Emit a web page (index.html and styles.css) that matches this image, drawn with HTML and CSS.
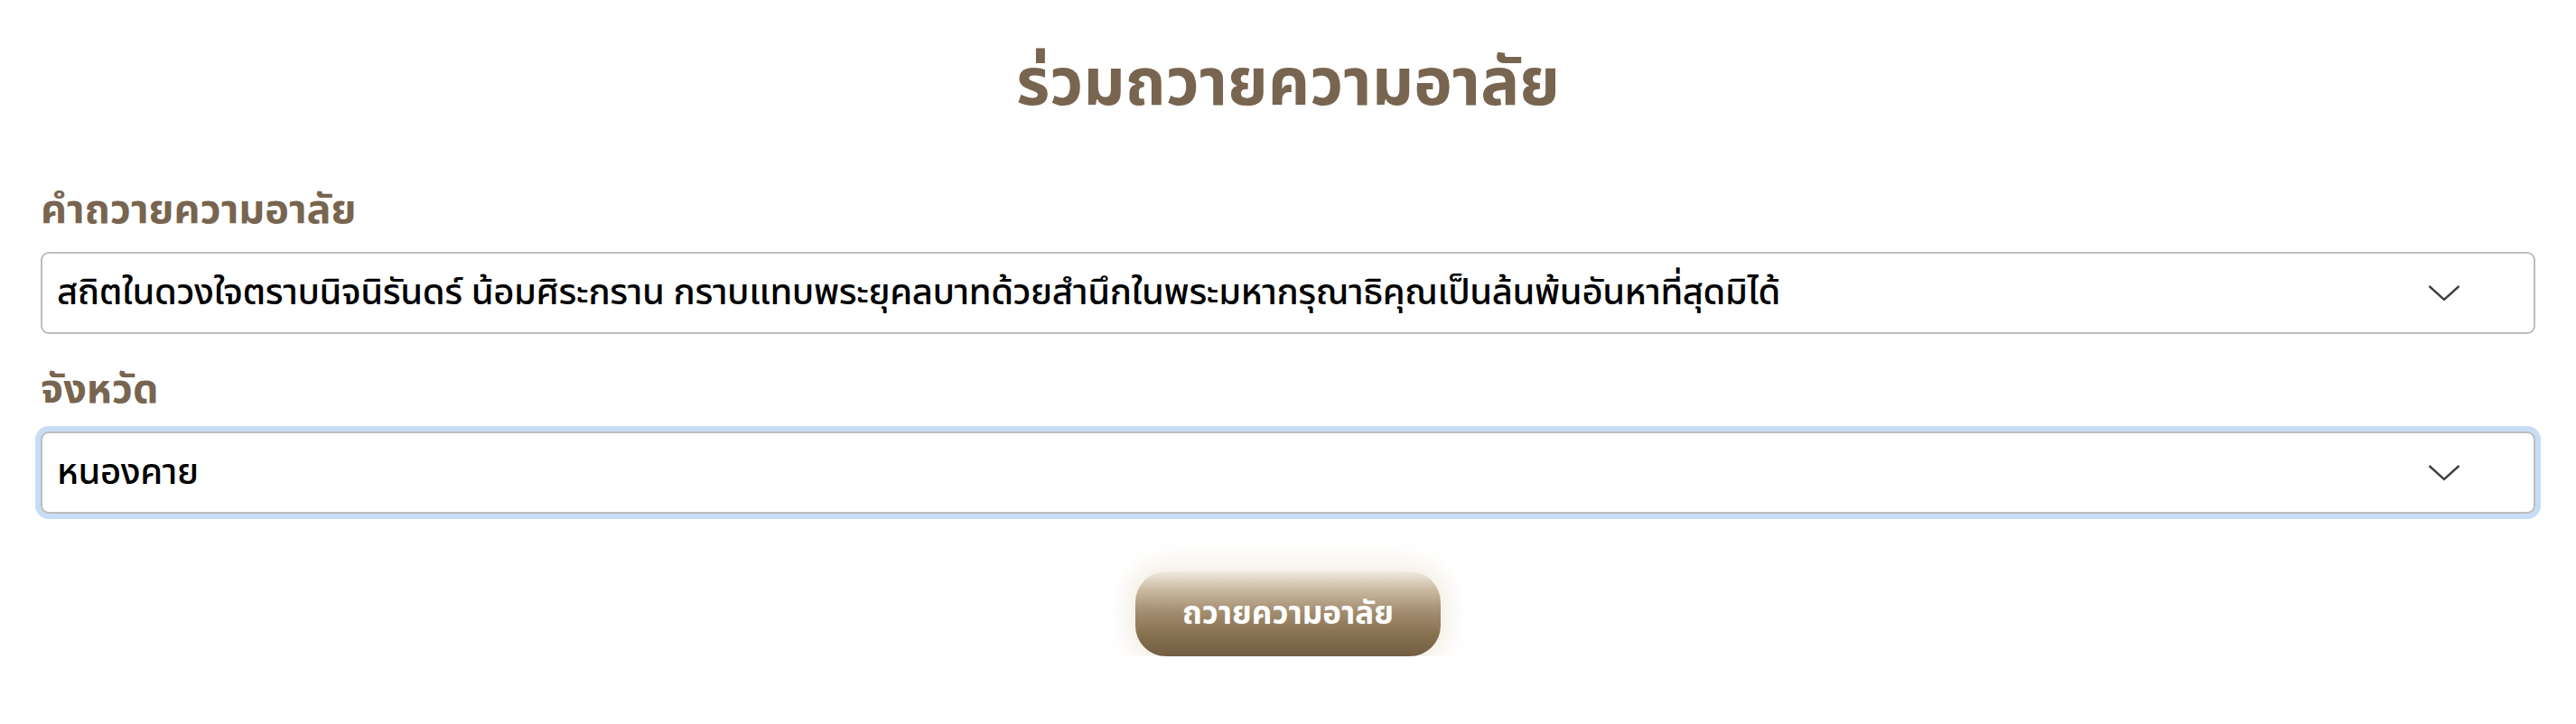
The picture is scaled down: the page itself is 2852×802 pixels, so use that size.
FILE: index.html
```html
<!DOCTYPE html>
<html lang="th">
<head>
<meta charset="utf-8">
<title>ร่วมถวายความอาลัย</title>
<link rel="stylesheet" href="styles.css">
</head>
<body>
<main class="page">
  <h1 class="title">ร่วมถวายความอาลัย</h1>
  <form class="form">
    <div class="field">
      <label class="label">คำถวายความอาลัย</label>
      <div class="select">
        <span class="select-text">สถิตในดวงใจตราบนิจนิรันดร์ น้อมศิระกราน กราบแทบพระยุคลบาทด้วยสำนึกในพระมหากรุณาธิคุณเป็นล้นพ้นอันหาที่สุดมิได้</span>
        <svg class="chevron" width="36" height="20" viewBox="0 0 36 20"><path d="M1.5 2 L18 17 L34.5 2" fill="none" stroke="#3f3f3f" stroke-width="2.4"/></svg>
      </div>
    </div>
    <div class="field">
      <label class="label">จังหวัด</label>
      <div class="select focused">
        <span class="select-text">หนองคาย</span>
        <svg class="chevron" width="36" height="20" viewBox="0 0 36 20"><path d="M1.5 2 L18 17 L34.5 2" fill="none" stroke="#3f3f3f" stroke-width="2.4"/></svg>
      </div>
    </div>
    <div class="actions">
      <button type="button" class="submit">ถวายความอาลัย</button>
    </div>
  </form>
</main>
</body>
</html>
```
FILE: styles.css
```css
html, body {
  margin: 0;
  padding: 0;
  background: #ffffff;
}
body {
  font-family: "Noto Sans Thai", "Noto Sans", "Liberation Sans", sans-serif;
}
.page {
  padding: 44px 45px 0 45px;
}
.title {
  margin: 0;
  text-align: center;
  color: #786550;
  font-size: 72px;
  font-weight: 700;
  line-height: 100px;
}
.form {
  display: flex;
  flex-direction: column;
  margin-top: 61px;
}
.field {
  display: flex;
  flex-direction: column;
  gap: 18px;
  margin-bottom: 34px;
}
.label {
  color: #786550;
  font-size: 45px;
  font-weight: 700;
  line-height: 56px;
}
.select {
  display: flex;
  align-items: center;
  justify-content: space-between;
  height: 91px;
  box-sizing: border-box;
  border: 2px solid #bdbdbd;
  border-radius: 9px;
  padding: 0 81px 0 16px;
  background: #fff;
}
.select.focused {
  box-shadow: 0 0 0 6px #c7ddf5;
}
.select-text {
  color: #000;
  font-size: 40px;
  font-weight: 500;
  letter-spacing: -0.4px;
  white-space: nowrap;
}
.chevron {
  flex: none;
}
.actions {
  display: flex;
  justify-content: center;
  margin-top: 30px;
}
.submit {
  width: 338px;
  height: 94px;
  border: none;
  border-radius: 34px;
  font-family: inherit;
  font-size: 35px;
  font-weight: 700;
  color: #fff;
  background: linear-gradient(to bottom, #efebe1 0%, #c9b9a1 22%, #a28c6f 48%, #85704f 75%, #735e43 100%);
  box-shadow: 0 0 26px 8px rgba(222, 200, 170, 0.35);
}
```
